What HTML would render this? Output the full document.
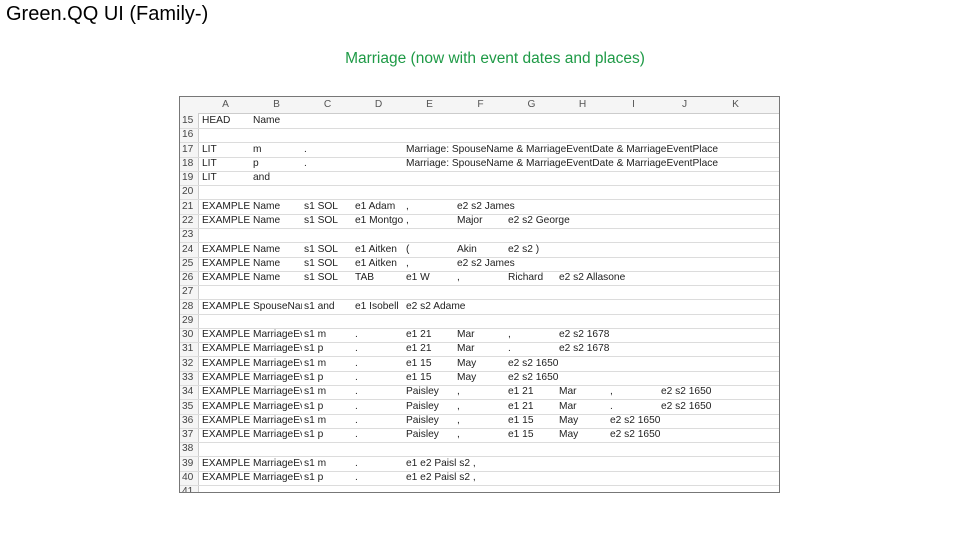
<!DOCTYPE html><html><head><style>
body{margin:0;width:960px;height:540px;background:#fff;position:relative;overflow:hidden;font-family:"Liberation Sans",sans-serif}
.t{position:absolute;left:6px;top:3px;font-size:20px;color:#000}
.s{position:absolute;left:0;width:990px;text-align:center;top:50px;font-size:15.5px;color:#1e9a46}
.sheet{position:absolute;left:179px;top:96px;width:601px;height:397px;border:1px solid #777;box-sizing:border-box;overflow:hidden;background:#fff}
.c{position:absolute;font-size:10.2px;color:#222;white-space:nowrap;line-height:14px}
.h{color:#555;text-align:center;width:51px}
.n{color:#444;left:2px}
.clip{overflow:hidden;width:49px}
.ln{position:absolute;left:0;width:601px;height:1px;background:#dcdcdc}
</style></head><body>
<div class="t">Green.QQ UI (Family-)</div>
<div class="s">Marriage (now with event dates and places)</div>
<div class="sheet" id="s"></div>
<script>
var s=document.getElementById('s');
var cols=[20,71,122,173,224,275,326,377,428,479,530];
var L="ABCDEFGHIJK";
var h='<div style="position:absolute;left:0;top:0;width:601px;height:16px;background:#f5f5f5;border-bottom:1px solid #ccc"></div><div style="position:absolute;left:0;top:16px;width:18px;height:381px;background:#f5f5f5;border-right:1px solid #ccc"></div>';
for(var i=0;i<11;i++)h+='<div class="c h" style="left:'+cols[i]+'px;top:1px">'+L[i]+'</div>';
var d={15:["HEAD","Name"],17:["LIT","m","."," ","Marriage: SpouseName & MarriageEventDate & MarriageEventPlace"],18:["LIT","p","."," ","Marriage: SpouseName & MarriageEventDate & MarriageEventPlace"],19:["LIT","and"],
21:["EXAMPLE","Name","s1 SOL","e1 Adam",",","e2 s2 James"],22:["EXAMPLE","Name","s1 SOL","e1 Montgo",",","Major","e2 s2 George"],
24:["EXAMPLE","Name","s1 SOL","e1 Aitken","(","Akin","e2 s2 )"],25:["EXAMPLE","Name","s1 SOL","e1 Aitken",",","e2 s2 James"],26:["EXAMPLE","Name","s1 SOL","TAB","e1 W",",","Richard","e2 s2 Allasone"],
28:["EXAMPLE","SpouseName","s1 and","e1 Isobell","e2 s2 Adame"],
30:["EXAMPLE","MarriageEvent","s1 m",".","e1 21","Mar",",","e2 s2 1678"],31:["EXAMPLE","MarriageEvent","s1 p",".","e1 21","Mar",".","e2 s2 1678"],
32:["EXAMPLE","MarriageEvent","s1 m",".","e1 15","May","e2 s2 1650"],33:["EXAMPLE","MarriageEvent","s1 p",".","e1 15","May","e2 s2 1650"],
34:["EXAMPLE","MarriageEvent","s1 m",".","Paisley",",","e1 21","Mar",",","e2 s2 1650"],35:["EXAMPLE","MarriageEvent","s1 p",".","Paisley",",","e1 21","Mar",".","e2 s2 1650"],
36:["EXAMPLE","MarriageEvent","s1 m",".","Paisley",",","e1 15","May","e2 s2 1650"],37:["EXAMPLE","MarriageEvent","s1 p",".","Paisley",",","e1 15","May","e2 s2 1650"],
39:["EXAMPLE","MarriageEvent","s1 m",".","e1 e2 Paisl s2 ,"],40:["EXAMPLE","MarriageEvent","s1 p",".","e1 e2 Paisl s2 ,"]};
for(var r=15;r<=41;r++){var y=17+(r-15)*14.28;
h+='<div class="ln" style="top:'+Math.round(y+14)+'px"></div>';
h+='<div class="c n" style="top:'+Math.round(y)+'px">'+r+'</div>';
var a=d[r];if(a)for(var j=0;j<a.length;j++){var x=cols[j]+2;var cl=(j==1&&a[2]&&a[2]!=" ")?' clip':'';
h+='<div class="c'+cl+'" style="left:'+x+'px;top:'+Math.round(y)+'px">'+a[j].replace(/&/g,'&amp;')+'</div>';}}
s.innerHTML=h;
</script></body></html>
